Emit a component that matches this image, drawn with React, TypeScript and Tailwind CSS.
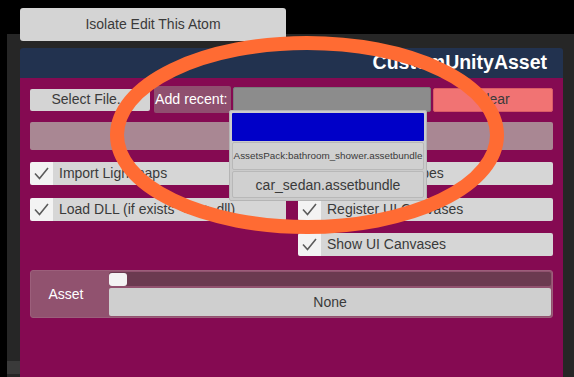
import React from "react";

const font = { fontFamily: '"Liberation Sans", Arial, sans-serif' };

function Check() {
  return (
    <svg width="17" height="15" viewBox="0 0 17 15">
      <polyline points="2,7.5 6.5,12.5 15,2" fill="none" stroke="#5c5c5c" strokeWidth="1.6" />
    </svg>
  );
}

function Toggle({ label }: { label: string }) {
  return (
    <div className="flex h-[23px] rounded-[2px] overflow-hidden">
      <div className="w-[23px] h-full bg-[#f3f3f3] flex items-center justify-center">
        <Check />
      </div>
      <div className="flex-1 h-full bg-[#d6d6d6] flex items-center pl-[6px] text-[14px] text-[#3a3a3a] whitespace-nowrap overflow-hidden">
        {label}
      </div>
    </div>
  );
}

export default function App() {
  return (
    <div className="relative w-[574px] h-[377px] bg-black overflow-hidden" style={font}>
      {/* dark window */}
      <div className="absolute left-[7px] top-[34px] right-0 bottom-0 bg-[#262626] pl-[13px] pr-[11px] pt-[14px] flex flex-col">
        <div className="flex-1 flex flex-col">
          <div className="h-[30px] bg-[#22324f] rounded-t-[3px] flex items-center justify-end pr-[16px]">
            <span className="text-white font-bold text-[19.5px]">CustomUnityAsset</span>
          </div>
          <div className="flex-1 bg-[#850a52] px-[10px] pt-[8px] flex flex-col">
            {/* row 1 */}
            <div className="flex items-center h-[27px]">
              <div className="w-[120px] h-[22px] bg-[#d4d4d4] rounded-[2px] flex items-center justify-center text-[14px] text-[#3a3a3a]">
                Select File...
              </div>
              <div className="ml-[4px] w-[77px] h-[27px] bg-[#8f4f6f] rounded-[2px] flex items-center pl-[1px] text-[14.2px] text-white whitespace-nowrap">
                Add recent:
              </div>
              <div className="ml-[2px] w-[198px] h-[25px] bg-[#8c8c8c] border border-[#7a7a7a] rounded-[2px]" />
              <div className="ml-[2px] w-[120px] h-[24px] bg-[#f17373] rounded-[2px] border border-[#d85c66] flex items-center justify-center text-[14px] text-[#3a3a3a]">
                Clear
              </div>
            </div>
            {/* row 2 */}
            <div className="mt-[9px] h-[28px] bg-[#a98793] rounded-[2px]" />
            {/* toggles */}
            <div className="mt-[12px] grid grid-cols-[256px_255px] gap-x-[12px] gap-y-[13px]">
              <Toggle label="Import Lightmaps" />
              <Toggle label="Import Lightprobes" />
              <Toggle label="Load DLL (if exists <file>.dll)" />
              <Toggle label="Register UI Canvases" />
              <div />
              <div className="-mt-[1px]">
                <Toggle label="Show UI Canvases" />
              </div>
            </div>
            {/* asset */}
            <div className="mt-[14px] h-[48px] bg-[#91526f] rounded-[3px] border border-[#9c5f7b] flex">
              <div className="w-[70px] mr-[8px] flex items-center justify-center text-white text-[14px]">Asset</div>
              <div className="flex-1 flex flex-col pt-[1px] pr-[1px]">
                <div className="h-[14px] bg-[#6b3a50] rounded-[2px] relative">
                  <div className="absolute left-0 top-[1px] w-[18px] h-[13px] bg-[#f3f3f3] rounded-[3px]" />
                </div>
                <div className="mt-[2px] h-[28px] bg-[#cfcfcf] rounded-[2px] flex items-center justify-center text-[14px] text-[#3a3a3a]">
                  None
                </div>
              </div>
            </div>
          </div>
        </div>
        <div className="absolute left-0 top-[327px] w-[13px] h-[13px] bg-[#3a3a3a]" />
      </div>

      {/* Isolate button */}
      <div className="absolute left-[20px] top-[8px] w-[266px] h-[33px] bg-[#d4d4d4] rounded-[3px] flex items-center justify-center text-[14px] text-[#3a3a3a]">
        Isolate Edit This Atom
      </div>

      {/* dropdown popup */}
      <div className="absolute left-[229px] top-[110px] w-[198px] h-[91px] bg-[#cbcbcb] border border-[#b5b5b5] rounded-[2px] p-[2px] flex flex-col gap-[1px]">
        <div className="h-[29px] bg-[#0000c8] rounded-[1px]" />
        <div className="h-[28px] bg-[#d0d0d0] border border-[#b8b8b8] rounded-[2px] flex items-center justify-center text-[9.9px] text-[#3a3a3a] whitespace-nowrap overflow-hidden">
          AssetsPack:bathroom_shower.assetbundle
        </div>
        <div className="h-[28px] bg-[#d0d0d0] border border-[#b8b8b8] rounded-[2px] flex items-center justify-center pt-[2px] text-[14px] text-[#3a3a3a] whitespace-nowrap">
          car_sedan.assetbundle
        </div>
      </div>

      {/* orange ellipse annotation */}
      <svg className="absolute left-0 top-0 pointer-events-none" width="574" height="377">
        <ellipse cx="307" cy="135" rx="190" ry="92" fill="none" stroke="#ff6b33" strokeWidth="14" />
      </svg>
    </div>
  );
}
